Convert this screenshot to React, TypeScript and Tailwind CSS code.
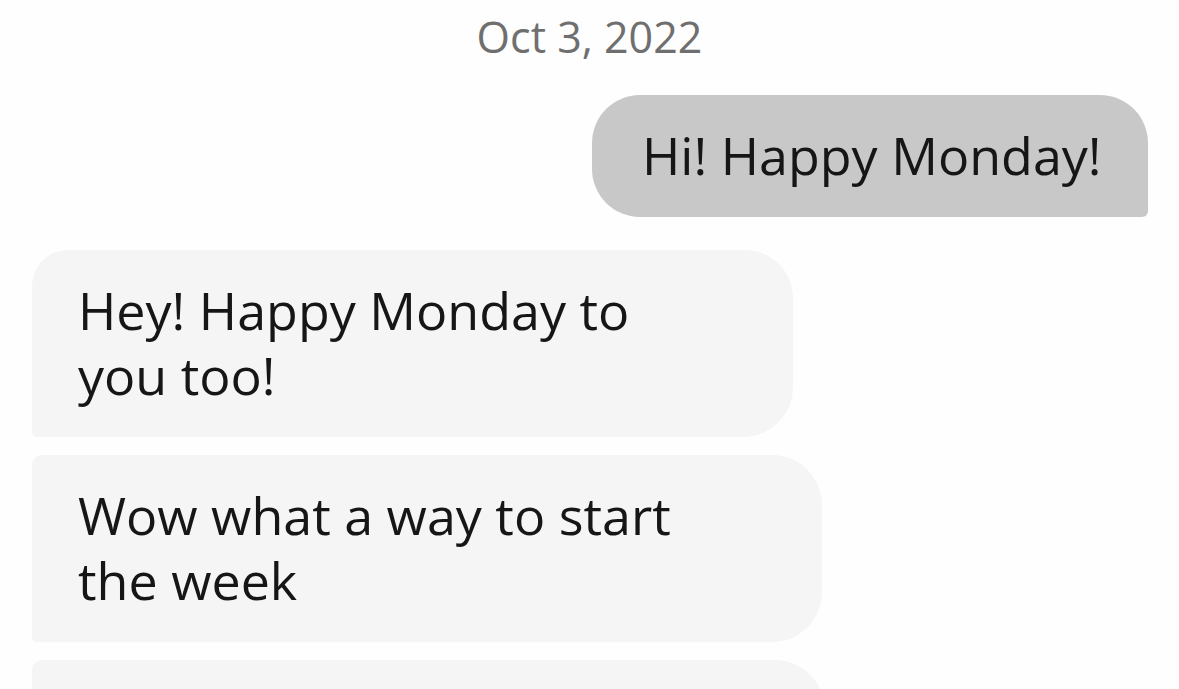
import React from "react";

export default function App() {
  return (
    <div
      className="w-[1179px] h-[689px] overflow-hidden bg-[#fefefe] text-[#161616]"
      style={{ fontFamily: "'Open Sans', 'Noto Sans', sans-serif" }}
    >
      <div className="pt-[11px] text-center text-[43px] leading-[52px] text-[#6f6f6f]">
        Oct 3, 2022
      </div>

      <div className="mt-[32px] flex flex-col px-[31px]">
        <div className="flex justify-end">
          <div className="w-[556px] rounded-tl-[48px] rounded-bl-[48px] rounded-tr-[48px] rounded-br-[6px] bg-[#c8c8c8] pl-[50px] pr-[44px] pt-[27px] pb-[30px] text-[52px] leading-[65px]">
            Hi! Happy Monday!
          </div>
        </div>

        <div className="mt-[33px] flex flex-col gap-[18px] pl-[1px]">
          <div className="w-[761px] rounded-tl-[36px] rounded-tr-[48px] rounded-br-[50px] rounded-bl-[5px] bg-[#f5f5f5] pl-[46px] pt-[27px] pb-[30px] text-[52px] leading-[65px]">
            <div className="w-[630px]">Hey! Happy Monday to you too!</div>
          </div>
          <div className="w-[790px] rounded-tl-[10px] rounded-tr-[50px] rounded-br-[50px] rounded-bl-[5px] bg-[#f5f5f5] pl-[46px] pt-[27px] pb-[30px] text-[52px] leading-[65px]">
            <div className="w-[630px]">Wow what a way to start the week</div>
          </div>
          <div className="h-[122px] w-[793px] shrink-0 rounded-tl-[10px] rounded-tr-[50px] rounded-br-[50px] rounded-bl-[5px] bg-[#f5f5f5]" />
        </div>
      </div>
    </div>
  );
}
